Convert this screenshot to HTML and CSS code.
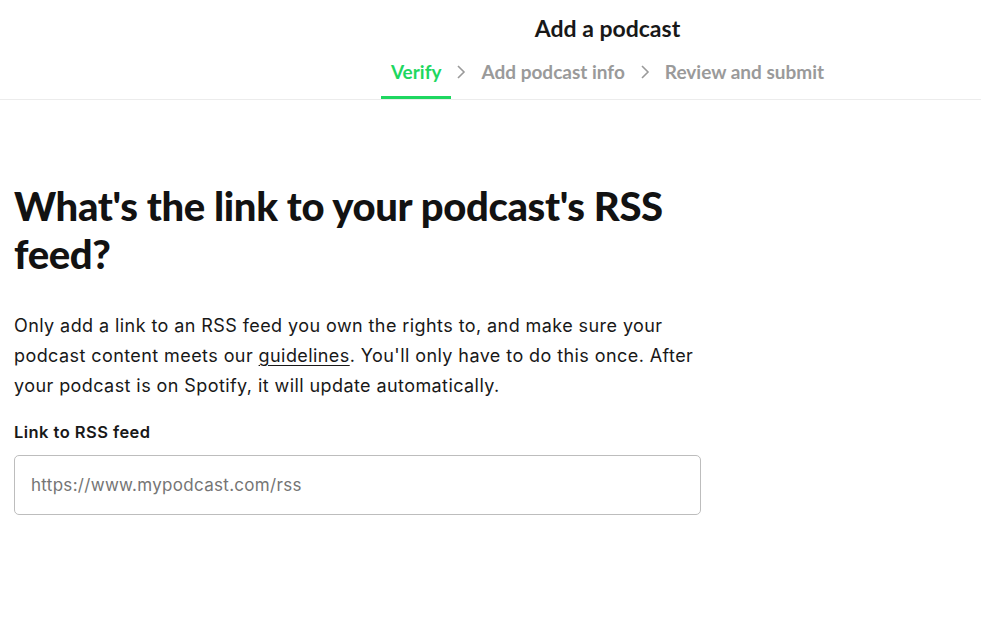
FILE: index.html
```html
<!DOCTYPE html>
<html lang="en">
<head>
<meta charset="utf-8">
<title>Add a podcast</title>
<link rel="stylesheet" href="styles.css">
</head>
<body>
<header class="topbar">
  <h1 class="topbar-title">Add a podcast</h1>
  <nav class="steps">
    <span class="step step-active">Verify</span>
    <svg class="chev" viewBox="0 0 10 16" width="10" height="16"><path d="M2 2l6 6-6 6" fill="none" stroke="#9a9a9a" stroke-width="1.6"/></svg>
    <span class="step">Add podcast info</span>
    <svg class="chev" viewBox="0 0 10 16" width="10" height="16"><path d="M2 2l6 6-6 6" fill="none" stroke="#9a9a9a" stroke-width="1.6"/></svg>
    <span class="step">Review and submit</span>
  </nav>
</header>
<main class="content">
  <h2 class="question">What's the link to your podcast's RSS feed?</h2>
  <p class="intro">Only add a link to an RSS feed you own the rights to, and make sure your podcast content meets our <a href="#" class="link">guidelines</a>. You'll only have to do this once. After your podcast is on Spotify, it will update automatically.</p>
  <label class="field-label" for="rss">Link to RSS feed</label>
  <input id="rss" class="field-input" type="text" placeholder="https://www.mypodcast.com/rss">
</main>
</body>
</html>
```
FILE: styles.css
```css
* { box-sizing: border-box; }
html, body { margin: 0; padding: 0; background: #fff; }
body {
  font-family: "Inter", "Liberation Sans", sans-serif;
  color: #181818;
}
.topbar {
  height: 100px;
  border-bottom: 1px solid #ececec;
  padding-left: 234px;
  display: flex;
  flex-direction: column;
  align-items: center;
}
.topbar-title {
  margin: 14px 0 0;
  font-family: "Lato", sans-serif;
  font-size: 23px;
  font-weight: 700;
  line-height: 28px;
  color: #181818;
}
.steps {
  margin-top: 16px;
  display: flex;
  align-items: center;
  gap: 5px;
}
.step {
  display: block;
  padding: 0 10px 11px;
  font-family: "Lato", sans-serif;
  font-size: 19px;
  font-weight: 700;
  line-height: 27px;
  color: #9a9a9a;
  border-bottom: 3px solid transparent;
}
.step-active {
  color: #1ed760;
  border-bottom-color: #1ed760;
}
.chev { margin-bottom: 14px; }
.content {
  padding: 82px 14px 0;
  width: 715px;
}
.question {
  margin: 0;
  font-family: "Lato", sans-serif;
  font-size: 40px;
  line-height: 48px;
  font-weight: 900;
  color: #121212;
  letter-spacing: -0.35px;
}
.intro {
  margin: 33px 0 0;
  font-size: 18px;
  line-height: 30px;
  letter-spacing: 0.42px;
  color: #181818;
}
.link { color: #181818; text-decoration: underline; text-underline-offset: 3px; }
.field-label {
  display: block;
  margin-top: 19px;
  font-size: 16.5px;
  font-weight: 600;
  line-height: 24px;
  letter-spacing: 0.45px;
}
.field-input {
  display: block;
  margin-top: 11px;
  width: 687px;
  height: 60px;
  padding: 0 16px;
  border: 1px solid #bdbdbd;
  border-radius: 5px;
  font-family: inherit;
  font-size: 17px;
  letter-spacing: 0.3px;
  color: #181818;
}
.field-input::placeholder { color: #757575; }
```
